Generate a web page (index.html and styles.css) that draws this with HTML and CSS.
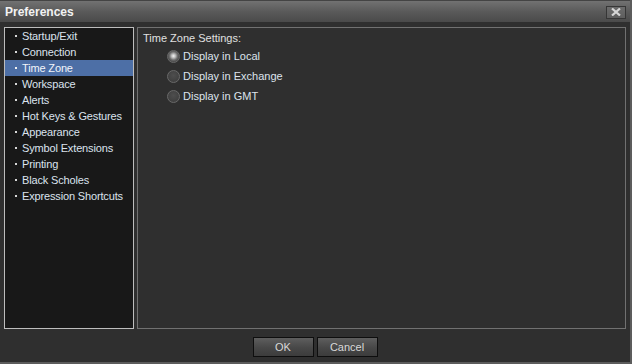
FILE: index.html
```html
<!DOCTYPE html>
<html lang="en">
<head>
  <meta charset="UTF-8" />
  <title>Preferences</title>
  <link rel="stylesheet" href="styles.css">
</head>
<body>
  <div class="window">
    <div class="titlebar">
      <span class="title">Preferences</span>
      <button class="close" aria-label="Close">
        <svg width="12" height="8" viewBox="0 0 12 8">
          <path d="M2 0.5 L10 7.5 M10 0.5 L2 7.5" stroke="#d6d6d6" stroke-width="2.2" />
        </svg>
      </button>
    </div>

    <div class="content">
      <!-- Category list -->
      <ul class="nav">
        <li>Startup/Exit</li>
        <li>Connection</li>
        <li class="active">Time Zone</li>
        <li>Workspace</li>
        <li>Alerts</li>
        <li>Hot Keys &amp; Gestures</li>
        <li>Appearance</li>
        <li>Symbol Extensions</li>
        <li>Printing</li>
        <li>Black Scholes</li>
        <li>Expression Shortcuts</li>
      </ul>

      <!-- Settings panel -->
      <div class="panel">
        <div class="panel-title">Time Zone Settings:</div>
        <label class="radio"><span class="dot checked"></span>Display in Local</label>
        <label class="radio"><span class="dot"></span>Display in Exchange</label>
        <label class="radio"><span class="dot"></span>Display in GMT</label>
      </div>
    </div>

    <div class="footer">
      <button class="btn">OK</button>
      <button class="btn">Cancel</button>
    </div>
  </div>
</body>
</html>
```

FILE: styles.css
```css
* {
  box-sizing: border-box;
  margin: 0;
  padding: 0;
}

body {
  background: #2f2f2f;
  font-family: 'Liberation Sans', Arial, sans-serif;
  font-size: 11px;
  color: #dde3ec;
}

.window {
  width: 632px;
  height: 364px;
  background: #2f2f2f;
  border-right: 2px solid #5c5c5c;
  border-bottom: 2px solid #5c5c5c;
  display: flex;
  flex-direction: column;
}

.titlebar {
  height: 22px;
  display: flex;
  align-items: center;
  justify-content: space-between;
  padding: 0 4px 0 5px;
  border-top: 1px solid #444;
  background: linear-gradient(#727272, #5a5a5a 50%, #4a4a4a);
}

.title {
  font-weight: bold;
  font-size: 12px;
  color: #f2f2f2;
}

.close {
  width: 20px;
  height: 13px;
  margin-top: 1px;
  border: 1px solid #363636;
  background: linear-gradient(#6c6c6c, #5e5e5e);
  display: flex;
  align-items: center;
  justify-content: center;
}

.content {
  display: flex;
  gap: 3px;
  padding: 5px 0 0 4px;
  height: 307px;
}

.nav {
  list-style: none;
  width: 130px;
  height: 302px;
  background: #181818;
  border: 1px solid #bdbdbd;
}

.nav li {
  height: 16px;
  line-height: 16px;
  padding-left: 17px;
  position: relative;
  color: #dce3ee;
  letter-spacing: -0.15px;
}

.nav li::before {
  content: "";
  position: absolute;
  left: 10px;
  top: 7px;
  width: 2px;
  height: 2px;
  background: #d8d8d8;
}

.nav li.active {
  background: #4d6fa6;
  color: #f2f5fa;
}

.nav li.active::before {
  background: #f2f2f2;
}

.panel {
  width: 489px;
  height: 302px;
  border: 1px solid #717171;
  padding: 2px 0 0 5px;
}

.panel-title {
  height: 16px;
  line-height: 16px;
  color: #e0e0e0;
}

.radio {
  display: flex;
  align-items: center;
  height: 20px;
  padding-left: 24px;
  color: #dde3ec;
}

.dot {
  width: 13px;
  height: 13px;
  border-radius: 50%;
  margin-right: 3px;
  border: 1px solid #6a6a6a;
  background: radial-gradient(circle at 50% 40%, #4e4e4e, #3a3a3a);
}

.dot.checked {
  background: radial-gradient(circle at 50% 45%, #f4f4f4 0, #bcbcbc 2px, #707070 4px, #454545 6px);
}

.footer {
  display: flex;
  justify-content: center;
  gap: 3px;
  padding-top: 8px;
}

.btn {
  width: 61px;
  height: 20px;
  border: 1px solid #0e0e0e;
  background: linear-gradient(#5e5e5e, #474747 55%, #3c3c3c);
  color: #d8d8d8;
  font-family: 'Liberation Sans', Arial, sans-serif;
  font-size: 11px;
}
```
